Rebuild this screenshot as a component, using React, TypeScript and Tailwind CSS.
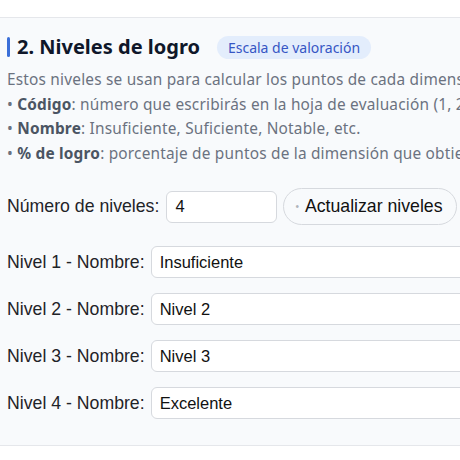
export default function App() {
  const niveles = ["Insuficiente", "Nivel 2", "Nivel 3", "Excelente"];

  return (
    <div className="w-[460px] h-[460px] overflow-hidden bg-white">
      <section className="mt-[17px] w-[720px] bg-[#f8fafc] border-y border-[#e5e7eb] pl-[7px] pt-[17px] pb-[26px]">
        {/* Header */}
        <div className="flex items-center gap-[17px] font-['Noto_Sans',sans-serif]">
          <h2 className="flex items-center gap-[7px] text-[20px] font-bold text-[#0f172a] leading-[24px]">
            <span className="w-[3px] h-[20px] bg-[#3b6fd8] rounded-sm" />
            2. Niveles de logro
          </h2>
          <span className="rounded-full bg-[#e3edfc] px-[11px] py-[2px] text-[14px] text-[#3656c4] leading-[19px]">
            Escala de valoración
          </span>
        </div>

        {/* Descripción */}
        <div className="mt-[9px] font-['Noto_Sans',sans-serif] text-[15.4px] tracking-[0.2px] leading-[24.5px] text-[#6b7280] whitespace-nowrap">
          <p>Estos niveles se usan para calcular los puntos de cada dimensión de la rúbrica.</p>
          <p>
            • <b className="text-[#4b5563]">Código</b>: número que escribirás en la hoja de evaluación (1, 2, 3, 4).
          </p>
          <p>
            • <b className="text-[#4b5563]">Nombre</b>: Insuficiente, Suficiente, Notable, etc.
          </p>
          <p>
            • <b className="text-[#4b5563]">% de logro</b>: porcentaje de puntos de la dimensión que obtiene el alumno.
          </p>
        </div>

        {/* Form */}
        <div className="mt-[22px] font-['Liberation_Sans',Arial,sans-serif] text-[17.7px] text-[#1f2328]">
          <div className="flex items-center gap-[7px]">
            <label>Número de niveles:</label>
            <input
              defaultValue="4"
              className="w-[111px] h-[32px] rounded-[6px] border border-[#d6d9de] bg-white px-[8px] text-[16.5px] text-[#111] outline-none"
            />
            <button className="ml-[-1px] h-[37px] rounded-full border border-[#d6d9de] bg-[#f8fafc] pl-[11px] pr-[13px] flex items-center gap-[6px] text-[17.7px] text-[#111]">
              <span className="text-[#b0b4ba] text-[10px]">•</span>
              Actualizar niveles
            </button>
          </div>

          <div className="mt-[21px] flex flex-col gap-[15px]">
            {niveles.map((n, i) => (
              <div key={i} className="flex items-center gap-[6px]">
                <label>Nivel {i + 1} - Nombre:</label>
                <input
                  defaultValue={n}
                  className="w-[400px] h-[32px] rounded-[6px] border border-[#d6d9de] bg-white px-[8px] text-[16.5px] text-[#111] outline-none"
                />
              </div>
            ))}
          </div>
        </div>
      </section>
    </div>
  );
}
